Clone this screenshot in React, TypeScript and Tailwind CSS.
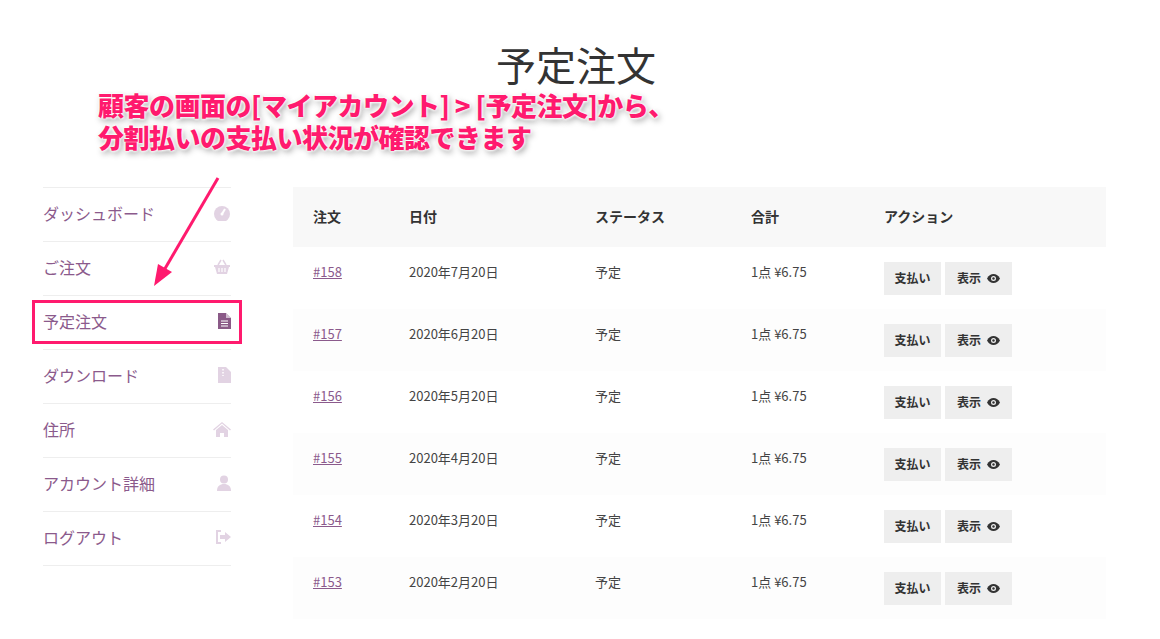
import React from "react";

const F = { fontFamily: '"Noto Sans CJK JP", "Noto Sans", sans-serif' };
const rows = [
  ["#158", "2020年7月20日"],
  ["#157", "2020年6月20日"],
  ["#156", "2020年5月20日"],
  ["#155", "2020年4月20日"],
  ["#154", "2020年3月20日"],
  ["#153", "2020年2月20日"],
];
const ic = "#e2d3e3";
const icons: Record<string, React.ReactNode> = {
  dash: (<svg width="18" height="16" viewBox="0 0 18 16"><circle cx="9" cy="9" r="8" fill={ic}/><path d="M9 9 L12 4" stroke="#fff" strokeWidth="2"/><circle cx="9" cy="9" r="1.5" fill="#fff"/></svg>),
  cart: (<svg width="18" height="16" viewBox="0 0 18 16"><path d="M1 6h16v2h-1l-2 7H4L2 8H1z" fill={ic}/><path d="M5 6l3-5M13 6l-3-5" stroke={ic} strokeWidth="1.5"/><path d="M6 9v4M9 9v4M12 9v4" stroke="#fff" strokeWidth="1.2"/></svg>),
  doc: (<svg width="13" height="16" viewBox="0 0 13 16"><path d="M0 0h8l5 5v11H0z" fill="#8a5a87"/><path d="M8 0v5h5" fill="#fff" opacity=".6"/><path d="M3 8h7M3 10.5h7M3 13h7" stroke="#fff" strokeWidth="1"/></svg>),
  zip: (<svg width="13" height="16" viewBox="0 0 13 16"><path d="M0 0h8l5 5v11H0z" fill={ic}/><path d="M5 2v7" stroke="#fff" strokeWidth="1.5" strokeDasharray="1.5 1.5"/></svg>),
  home: (<svg width="18" height="16" viewBox="0 0 18 16"><path d="M9 1L0 8.5l1 1 8-7 8 7 1-1z" fill={ic}/><path d="M3 9l6-5 6 5v7h-4v-4H7v4H3z" fill={ic}/></svg>),
  user: (<svg width="14" height="16" viewBox="0 0 14 16"><circle cx="7" cy="4.5" r="4" fill={ic}/><path d="M0 16c0-5 3-7 7-7s7 2 7 7z" fill={ic}/></svg>),
  out: (<svg width="16" height="14" viewBox="0 0 16 14"><path d="M6 1H2v12h4" stroke={ic} strokeWidth="2" fill="none"/><path d="M5 5h5V2l6 5-6 5V9H5z" fill={ic}/></svg>),
};
const nav: [string, string][] = [
  ["ダッシュボード", "dash"], ["ご注文", "cart"], ["予定注文", "doc"], ["ダウンロード", "zip"],
  ["住所", "home"], ["アカウント詳細", "user"], ["ログアウト", "out"],
];

export default function App() {
  return (
    <div className="relative w-[1160px] h-[639px] bg-white overflow-hidden" style={F}>
      <h1 className="text-center text-[40px] text-[#333] pt-[36px] leading-[56px] pr-[8px]">予定注文</h1>
      <div className="flex mt-[95px] pl-[43px]">
        <div className="w-[188px] border-t border-[#eee]">
          {nav.map(([t, k]) => (
            <div key={t} className="h-[54px] flex items-center justify-between border-b border-[#eee] text-[16px] text-[#8b5a8c] pb-[4px]">
              <span>{t}</span>
              <span className="flex items-center">{icons[k]}</span>
            </div>
          ))}
        </div>
        <div className="ml-[62px] w-[813px] text-[13px] text-[#444]">
          <div className="flex h-[60px] items-center bg-[#f8f8f8] font-bold text-[14px] text-[#333] pb-[2px]">
            <div className="w-[116px] pl-[20px]">注文</div>
            <div className="w-[186px]">日付</div>
            <div className="w-[156px]">ステータス</div>
            <div className="w-[133px]">合計</div>
            <div>アクション</div>
          </div>
          {rows.map(([n, d], i) => (
            <div key={n} className={`flex h-[62px] items-center ${i % 2 ? "bg-[#fdfdfd]" : "bg-white"}`}>
              <div className="w-[116px] pl-[20px] -mt-[12px]"><span className="underline text-[#8b5a8c]">{n}</span></div>
              <div className="w-[186px] -mt-[12px]">{d}</div>
              <div className="w-[156px] -mt-[12px]">予定</div>
              <div className="w-[133px] -mt-[12px]">1点 ¥6.75</div>
              <div className="flex gap-[4px]">
                <div className="w-[57px] h-[33px] bg-[#eeeeee] flex items-center justify-center font-bold text-[12px] text-[#333]">支払い</div>
                <div className="w-[67px] h-[33px] bg-[#eeeeee] flex items-center justify-center gap-[6px] font-bold text-[12px] text-[#333]">
                  表示
                  <svg width="13" height="9" viewBox="0 0 13 9"><path d="M0 4.5C2 1 4 0 6.5 0S11 1 13 4.5C11 8 9 9 6.5 9S2 8 0 4.5z" fill="#333"/><circle cx="6.5" cy="4.5" r="2.5" fill="#eee"/><circle cx="6.5" cy="4.5" r="1.2" fill="#333"/></svg>
                </div>
              </div>
            </div>
          ))}
        </div>
      </div>
      <div className="absolute left-[32px] top-[300px] w-[210px] h-[44px] border-[3px] border-[#ff1a6e]" />
      <svg className="absolute left-0 top-0" width="300" height="300">
        <line x1="218" y1="178" x2="163" y2="272" stroke="#ff1a6e" strokeWidth="3" />
        <path d="M154 286 L158 264 L172 272 Z" fill="#ff1a6e" />
      </svg>
      <div
        className="absolute left-[98px] top-[89px] text-[26px] font-black leading-[32px] text-[#ff1a6e] tracking-[-0.5px]"
        style={{ textShadow: "0 0 3px #fff, 0 0 3px #fff, 0 0 3px #fff, 2px 3px 6px rgba(0,0,0,.4)" }}
      >
        <div>顧客の画面の[マイアカウント] &gt; [予定注文]から、</div>
        <div>分割払いの支払い状況が確認できます</div>
      </div>
    </div>
  );
}
